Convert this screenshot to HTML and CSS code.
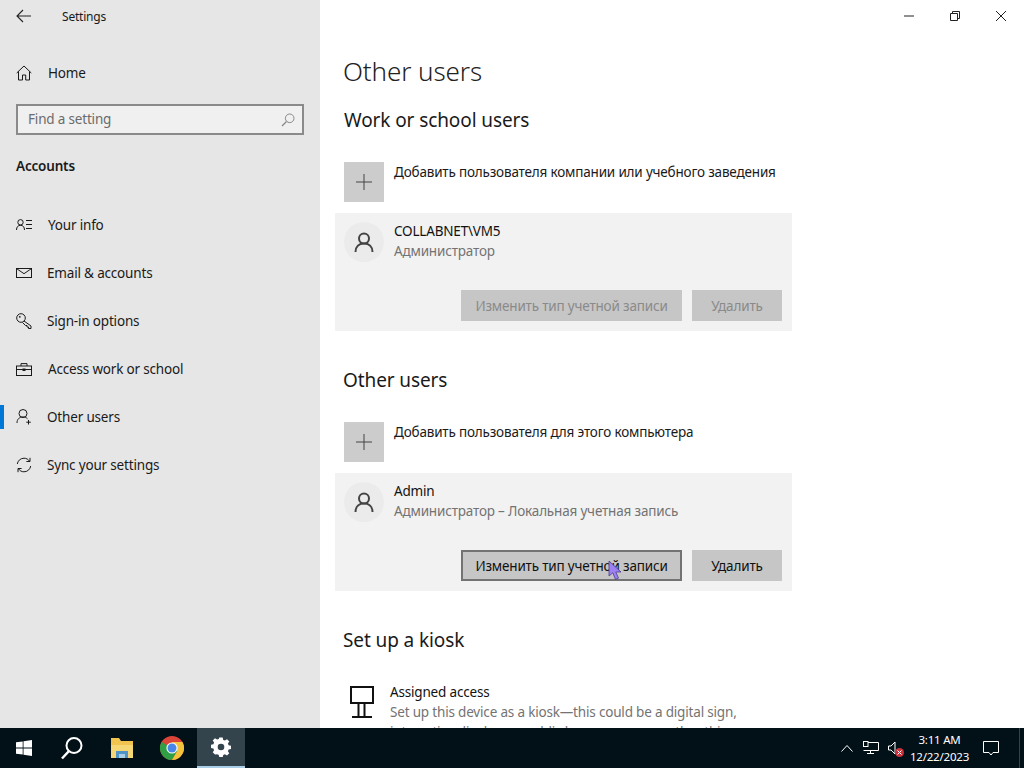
FILE: index.html
```html
<!DOCTYPE html>
<html lang="en">
<head>
<meta charset="utf-8">
<title>Settings</title>
<link rel="stylesheet" href="styles.css">
</head>
<body>
<div class="window">
  <aside class="sidebar">
    <div class="titlebar">
      <svg class="back" viewBox="0 0 16 14" width="16" height="14"><path d="M7 1 1 7l6 6M1 7h14" fill="none" stroke="#222" stroke-width="1.1"/></svg>
      <span class="app-title">Settings</span>
    </div>
    <div class="home">
      <svg class="icon" viewBox="0 0 16 16" width="16" height="16"><path d="M.7 8 8 1l7.3 7M2.5 6.5V15h4v-5h3.2v5h3.800V6.500" fill="none" stroke="#1a1a1a" stroke-width="1"/></svg>
      <span>Home</span>
    </div>
    <div class="search">
      <span class="search-text">Find a setting</span>
      <svg viewBox="0 0 14 14" width="14" height="14"><circle cx="8.700" cy="5.300" r="4.300" fill="none" stroke="#888" stroke-width="1"/><path d="M5.500 8.500 1 13" stroke="#888" stroke-width="1.200"/></svg>
    </div>
    <div class="section-title">Accounts</div>
    <nav class="nav">
      <div class="nav-item">
        <svg class="icon" viewBox="0 0 16 12" width="16" height="12"><circle cx="4.500" cy="3.300" r="2.700" fill="none" stroke="#1a1a1a"/><path d="M.5 11c0-3 1.500-4.700 4-4.700s4 1.700 4 4.700M10 1.500h6M10 5.500h6M10 9.500h6" fill="none" stroke="#1a1a1a"/></svg>
        <span class="shift">Your info</span>
      </div>
      <div class="nav-item">
        <svg class="icon" viewBox="0 0 16 10" width="16" height="10"><rect x=".5" y=".5" width="15" height="9" fill="none" stroke="#1a1a1a"/><path d="m.7.7 7.300 5 7.300-5" fill="none" stroke="#1a1a1a"/></svg>
        <span>Email &amp; accounts</span>
      </div>
      <div class="nav-item">
        <svg class="icon" viewBox="0 0 16 16" width="16" height="16"><circle cx="5" cy="5" r="4.300" fill="none" stroke="#1a1a1a"/><circle cx="3.800" cy="3.800" r=".9" fill="#1a1a1a"/><path d="m8 8 7 5v2.500h-2.500V14H11v-1.500H9.500L6.500 9.500" fill="none" stroke="#1a1a1a"/></svg>
        <span>Sign-in options</span>
      </div>
      <div class="nav-item">
        <svg class="icon" viewBox="0 0 16 13" width="16" height="13"><rect x=".5" y="3" width="15" height="9.500" fill="none" stroke="#1a1a1a"/><path d="M5 3V.6h6V3M.5 6.500h15" fill="none" stroke="#1a1a1a"/><rect x="6.500" y="5.500" width="3" height="2.500" fill="#1a1a1a"/></svg>
        <span class="shift">Access work or school</span>
      </div>
      <div class="nav-item current">
        <svg class="icon" viewBox="0 0 16 16" width="16" height="16"><circle cx="7" cy="4.500" r="4" fill="none" stroke="#1a1a1a"/><path d="M1 14c0-3.800 2.300-6 6-6 2 0 3.500.6 4.500 1.800M12.500 11v4.500M10.300 13.200h4.500" fill="none" stroke="#1a1a1a"/></svg>
        <span>Other users</span>
      </div>
      <div class="nav-item">
        <svg class="icon" viewBox="0 0 16 16" width="16" height="16"><path d="M1.300 7C1.800 3.700 4.500 1.200 8 1.200c2.300 0 4.300 1.100 5.500 2.900M14.700 9c-.5 3.300-3.200 5.800-6.700 5.800-2.300 0-4.300-1.100-5.500-2.900M14 .8v3.700h-3.600M2 15.200v-3.700h3.600" fill="none" stroke="#1a1a1a"/></svg>
        <span>Sync your settings</span>
      </div>
    </nav>
  </aside>
  <main class="content">
    <h1>Other users</h1>
    <h2 class="first">Work or school users</h2>
    <div class="add-row">
      <div class="add-tile"><svg viewBox="0 0 16 16" width="16" height="16"><path d="M8 0v16M0 8h16" stroke="#444" stroke-width="1"/></svg></div>
      <span>Добавить пользователя компании или учебного заведения</span>
    </div>
    <section class="card">
      <div class="user">
        <div class="avatar"><svg viewBox="0 0 20 20" width="20" height="20"><circle cx="10" cy="6.500" r="5" fill="none" stroke="#444" stroke-width="2"/><path d="M1.500 20c0-5.500 3.500-8.500 8.500-8.500s8.500 3 8.500 8.500" fill="none" stroke="#444" stroke-width="2"/></svg></div>
        <div class="user-text">
          <div class="user-name">COLLABNET\VM5</div>
          <div class="user-role">Администратор</div>
        </div>
      </div>
      <div class="actions">
        <button class="btn wide disabled">Изменить тип учетной записи</button>
        <button class="btn narrow disabled">Удалить</button>
      </div>
    </section>
    <h2>Other users</h2>
    <div class="add-row">
      <div class="add-tile"><svg viewBox="0 0 16 16" width="16" height="16"><path d="M8 0v16M0 8h16" stroke="#444" stroke-width="1"/></svg></div>
      <span>Добавить пользователя для этого компьютера</span>
    </div>
    <section class="card">
      <div class="user">
        <div class="avatar"><svg viewBox="0 0 20 20" width="20" height="20"><circle cx="10" cy="6.500" r="5" fill="none" stroke="#444" stroke-width="2"/><path d="M1.500 20c0-5.500 3.500-8.500 8.500-8.500s8.500 3 8.500 8.500" fill="none" stroke="#444" stroke-width="2"/></svg></div>
        <div class="user-text">
          <div class="user-name">Admin</div>
          <div class="user-role">Администратор – Локальная учетная запись</div>
        </div>
      </div>
      <div class="actions">
        <button class="btn wide focused">Изменить тип учетной записи</button>
        <button class="btn narrow">Удалить</button>
      </div>
    </section>
    <h2 class="kiosk-title">Set up a kiosk</h2>
    <div class="kiosk">
      <svg class="kiosk-icon" viewBox="0 0 24 32" width="24" height="32"><path d="M1 1h22v16H1zM8.500 17v14M14.500 17v14M2 31h20" fill="none" stroke="#111" stroke-width="2"/></svg>
      <div>
        <div class="kiosk-name">Assigned access</div>
        <div class="kiosk-desc">Set up this device as a kiosk—this could be a digital sign, interactive display, or public browser, among other things.</div>
      </div>
    </div>
  </main>
  <div class="controls">
    <svg viewBox="0 0 10 10" width="10" height="10"><path d="M0 5h10" stroke="#222"/></svg>
    <svg viewBox="0 0 10 10" width="10" height="10"><path d="M.5 2.500h7v7h-7zM2.500 2.500V.5h7v7h-2" fill="none" stroke="#222"/></svg>
    <svg viewBox="0 0 10 10" width="10" height="10"><path d="m0 0 10 10M10 0 0 10" stroke="#222"/></svg>
  </div>
  <svg class="cursor" viewBox="0 0 14 21" width="14" height="21"><path d="M1 1v15l3.800-3.200 2.700 6.700 3-1.300-2.700-6.200H13z" fill="#9d80f2" stroke="#4a3a90" stroke-width=".8"/></svg>
</div>
<footer class="taskbar">
  <div class="task-left">
    <div class="task start"><svg viewBox="0 0 16 16" width="16" height="16"><path d="M0 2.300 6.700 1.400V7.600H0zM7.500 1.300 16 0v7.600H7.500zM0 8.400H6.700V14.600L0 13.700zM7.500 8.400H16V16L7.500 14.700z" fill="#fff"/></svg></div>
    <div class="task"><svg viewBox="0 0 24 24" width="24" height="24"><circle cx="14" cy="9.500" r="7.500" fill="none" stroke="#fff" stroke-width="2"/><path d="M9 15 2 22.500" stroke="#fff" stroke-width="2.500"/></svg></div>
    <div class="task explorer"><svg viewBox="0 0 24 22" width="24" height="22"><path d="M1 1h8l2 3h12v17H1z" fill="#f1c34f"/><path d="M1 8h22v13H1z" fill="#f6d775"/><path d="M6 14h12v7H6z" fill="#4e94c8"/><path d="M9 17h6v4H9z" fill="#a9cfe4"/></svg></div>
    <div class="task"><svg viewBox="0 0 24 24" width="24" height="24"><circle cx="12" cy="12" r="12" fill="#db4437"/><path d="M12 12 1.600 6A12 12 0 0 0 12 24l6-10z" fill="#2f9e44"/><path d="M12 6h10.400A12 12 0 0 1 12 24l5.200-9z" fill="#f5c33b"/><circle cx="12" cy="12" r="5.600" fill="#fff"/><circle cx="12" cy="12" r="4.500" fill="#4a86e8"/></svg></div>
    <div class="task active"><svg viewBox="0 0 20 20" width="20" height="20"><path d="M8.300 1h3.400l.5 2.500 1.700.7 2.100-1.400 2.300 2.300-1.400 2.100.7 1.700 2.500.5v3.200l-2.500.5-.7 1.700 1.400 2.100-2.300 2.300-2.100-1.400-1.700.7-.5 2.500H8.300l-.5-2.500-1.700-.7L4 18.200l-2.300-2.300 1.400-2.100-.7-1.700-2.500-.5V8.400l2.500-.5.700-1.700L1.700 4.100 4 1.800l2.100 1.400 1.700-.7z" fill="#fff" transform="translate(0 -.600)"/><circle cx="10" cy="10" r="3.300" fill="#33444d"/></svg></div>
  </div>
  <div class="tray">
    <svg viewBox="0 0 12 7" width="12" height="7"><path d="m.5 6.500 5.500-6 5.500 6" fill="none" stroke="#fff"/></svg>
    <svg class="tray-net" viewBox="0 0 16 14" width="16" height="14"><path d="M4 1.500h11.500v8H.5M4 12.500h7M7.500 9.500v3" fill="none" stroke="#fff"/><rect x=".5" y=".5" width="4.500" height="5" fill="#021018" stroke="#fff"/></svg>
    <span class="tray-sound">
      <svg viewBox="0 0 16 14" width="16" height="14"><path d="M.5 5h2.500L7 1v12L3 9H.5z" fill="none" stroke="#fff"/></svg>
      <svg class="mute" viewBox="0 0 9 9" width="9" height="9"><circle cx="4.500" cy="4.500" r="4.500" fill="#c8323c"/><path d="m2.500 2.500 4 4m0-4-4 4" stroke="#fff"/></svg>
    </span>
    <div class="clock"><div>3:11 AM</div><div>12/22/2023</div></div>
    <svg class="notif" viewBox="0 0 16 15" width="16" height="15"><path d="M.5.500h15v11H10l-2 2.500-2-2.500H.5z" fill="none" stroke="#fff"/></svg>
    <div class="show-desktop"></div>
  </div>
</footer>
</body>
</html>
```
FILE: styles.css
```css
* { box-sizing: border-box; }
html, body { margin: 0; height: 100%; overflow: hidden; }
body {
  display: flex;
  flex-direction: column;
  height: 768px;
  font-family: "Noto Sans", "Open Sans", sans-serif;
  font-size: 13.5px;
  letter-spacing: -0.18px;
  color: #1a1a1a;
  background: #fff;
}
.window { position: relative; display: flex; height: 728px; overflow: hidden; }
.sidebar { width: 320px; flex: none; background: #e6e6e6; }
.titlebar { display: flex; align-items: center; height: 32px; padding-left: 16px; }
.app-title { margin-left: 30px; font-size: 12px; letter-spacing: -0.2px; }
.back { display: block; }
.home, .nav-item { display: flex; align-items: center; height: 48px; padding-left: 16px; }
.home { margin-top: 17px; }
.home span { margin-left: 16px; }
.icon { flex: none; width: 16px; }
.search {
  display: flex;
  align-items: center;
  justify-content: space-between;
  height: 31px;
  margin: 7px 16px 0;
  padding: 0 7px 0 10px;
  background: #f0f0f0;
  border: 2px solid #8a8a8a;
  color: #6b6b6b;
}
.search-text { padding-bottom: 2px; }
.section-title { margin: 21px 0 0 16px; font-weight: 600; height: 20px; line-height: 20px; }
.nav { margin-top: 25px; }
.nav-item span { margin-left: 15px; }
.nav-item span.shift { margin-left: 16px; }
.current { position: relative; }
.current::before { content: ""; position: absolute; left: 0; top: 12px; width: 4px; height: 24px; background: #0078d7; }
.content { flex: 1; padding: 0 0 0 23px; min-width: 0; }
h1 { margin: 52px 0 0; font-size: 26px; font-weight: 300; line-height: 38px; letter-spacing: -0.1px; color: #222; }
h2 { margin: 35px 0 0; font-size: 19px; font-weight: 400; line-height: 28px; letter-spacing: -0.1px; }
h2.first { margin: 16px 0 0 1px; }
h2.kiosk-title { margin-top: 35px; }
.add-row { display: flex; margin: 28px 0 0 1px; }
.add-row span { margin: 0 0 0 10px; line-height: 20px; }
.add-tile { display: flex; align-items: center; justify-content: center; width: 40px; height: 40px; background: #ccc; }
.card { width: 457px; height: 118px; margin: 11px 0 0 -8px; padding: 9px; background: #f2f2f2; }
.user { display: flex; }
.avatar { display: flex; align-items: center; justify-content: center; width: 40px; height: 40px; border-radius: 50%; background: #ebebeb; }
.user-text { margin-left: 10px; }
.user-name { line-height: 19px; color: #111; }
.user-role { line-height: 20px; color: #737373; }
.actions { display: flex; justify-content: flex-end; gap: 10px; margin-top: 28px; padding-right: 1px; }
.btn { height: 31px; border: 0; padding: 0; font: inherit; letter-spacing: inherit; background: #c6c6c6; color: #111; }
.wide { width: 221px; }
.narrow { width: 90px; }
.disabled { color: #8a8a8a; }
.focused { border: 2px solid #737373; }
.kiosk { display: flex; margin: 28px 0 0 7px; }
.kiosk-icon { flex: none; margin: 4px 16px 0 0; }
.kiosk-name { line-height: 20px; color: #111; }
.kiosk-desc { width: 365px; line-height: 20px; color: #737373; }
.controls { position: absolute; top: 11px; right: 18px; display: flex; gap: 36px; }
.controls svg { display: block; }
.cursor { position: absolute; left: 608px; top: 560px; }
.taskbar { display: flex; justify-content: space-between; height: 40px; background: #021018; color: #fff; }
.task-left { display: flex; }
.task { display: flex; align-items: center; justify-content: center; width: 48px; height: 40px; }
.explorer { width: 52px; }
.active { background: #33444d; margin-left: 1px; border-bottom: 2px solid #a9cfe8; }
.tray { display: flex; align-items: center; }
.tray-net { margin-left: 10px; }
.tray-sound { position: relative; display: block; width: 16px; height: 14px; margin-left: 9px; }
.tray-sound svg { display: block; }
.mute { position: absolute; left: 7px; top: 7px; }
.clock { width: 71px; font-size: 11.5px; letter-spacing: -0.2px; line-height: 17px; text-align: center; }
.notif { margin-left: 8px; }
.show-desktop { width: 5px; height: 40px; margin-left: 20px; border-left: 1px solid #33444d; }
```
